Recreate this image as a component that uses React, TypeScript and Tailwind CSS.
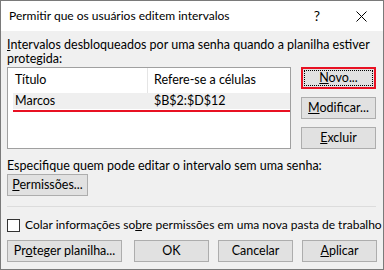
import React from "react";

const font = { fontFamily: 'Lato, "Noto Sans", sans-serif' };

function Btn({ children, className = "" }: { children: React.ReactNode; className?: string }) {
  return (
    <div
      className={`h-[22px] flex items-center justify-center bg-[#e1e1e1] border border-[#adadad] text-[12.5px] text-black ${className}`}
    >
      {children}
    </div>
  );
}

export default function App() {
  return (
    <div
      className="w-[384px] h-[270px] border border-[#7a7a7a] bg-[#f0f0f0] flex flex-col overflow-hidden text-[12.5px] text-black whitespace-nowrap"
      style={font}
    >
      {/* title bar */}
      <div className="h-[30px] bg-white flex items-center pl-[8px] shrink-0">
        <span className="text-[12px] leading-none">Permitir que os usuários editem intervalos</span>
        <span className="ml-auto mr-[36px] text-[14px] leading-none">?</span>
        <svg width="11" height="11" viewBox="0 0 11 11" className="mr-[16px]">
          <path d="M0.5 0.5 L10.5 10.5 M10.5 0.5 L0.5 10.5" stroke="#000" strokeWidth="1" />
        </svg>
      </div>

      <div className="flex flex-col px-[6px] pt-[7px]">
        <div className="leading-[14px]">
          <span className="underline">I</span>ntervalos desbloqueados por uma senha quando a planilha estiver
          <br />
          protegida:
        </div>

        <div className="flex mt-[1px] gap-[10px]">
          {/* list box */}
          <div className="w-[284px] h-[82px] bg-white border border-[#a0a0a0] flex flex-col pl-[5px]">
            <div className="h-[25px] flex items-center">
              <div className="w-[135px] h-full flex items-center pl-[2px] border-r border-[#e5e5e5]">Título</div>
              <div className="pl-[6px]">Refere-se a células</div>
            </div>
            <div className="h-[16px] bg-[#efefef] flex items-center">
              <div className="w-[136px] pl-[2px]">Marcos</div>
              <div className="pl-[5px]">$B$2:$D$12</div>
            </div>
            <div className="h-[2px] bg-[#e81123] mt-[1px]" />
          </div>

          {/* side buttons */}
          <div className="flex flex-col gap-[8px]">
            <div className="w-[75px] h-[22px] border-2 border-[#e81123] bg-[#e1e1e1] p-[1px]">
              <div className="w-full h-full border border-dotted border-black flex items-center justify-center">
                <span><span className="underline">N</span>ovo...</span>
              </div>
            </div>
            <Btn className="w-[75px]">
              <span><span className="underline">M</span>odificar...</span>
            </Btn>
            <Btn className="w-[75px]">
              <span><span className="underline">E</span>xcluir</span>
            </Btn>
          </div>
        </div>

        <div className="leading-[14px] mt-[10px]">Especifique quem pode editar o intervalo sem uma senha:</div>
        <Btn className="w-[81px] mt-[1px]">
          <span><span className="underline">P</span>ermissões...</span>
        </Btn>

        <div className="h-px bg-[#dcdcdc] mt-[10px] mr-[1px]" />

        <div className="flex items-center mt-[11px] h-[14px]">
          <div className="w-[13px] h-[13px] shrink-0 bg-white border border-[#333]" />
          <span className="ml-[5px] text-[12px]">
            Colar informações so<span className="underline">b</span>re permissões em uma nova pasta de trabalho
          </span>
        </div>

        <div className="flex mt-[8px]">
          <Btn className="w-[115px]">
            <span>Pr<span className="underline">o</span>teger planilha...</span>
          </Btn>
          <Btn className="w-[75px] ml-[12px]">OK</Btn>
          <Btn className="w-[75px] ml-[9px]">Cancelar</Btn>
          <Btn className="w-[75px] ml-[9px]">
            <span><span className="underline">A</span>plicar</span>
          </Btn>
        </div>
      </div>
    </div>
  );
}
